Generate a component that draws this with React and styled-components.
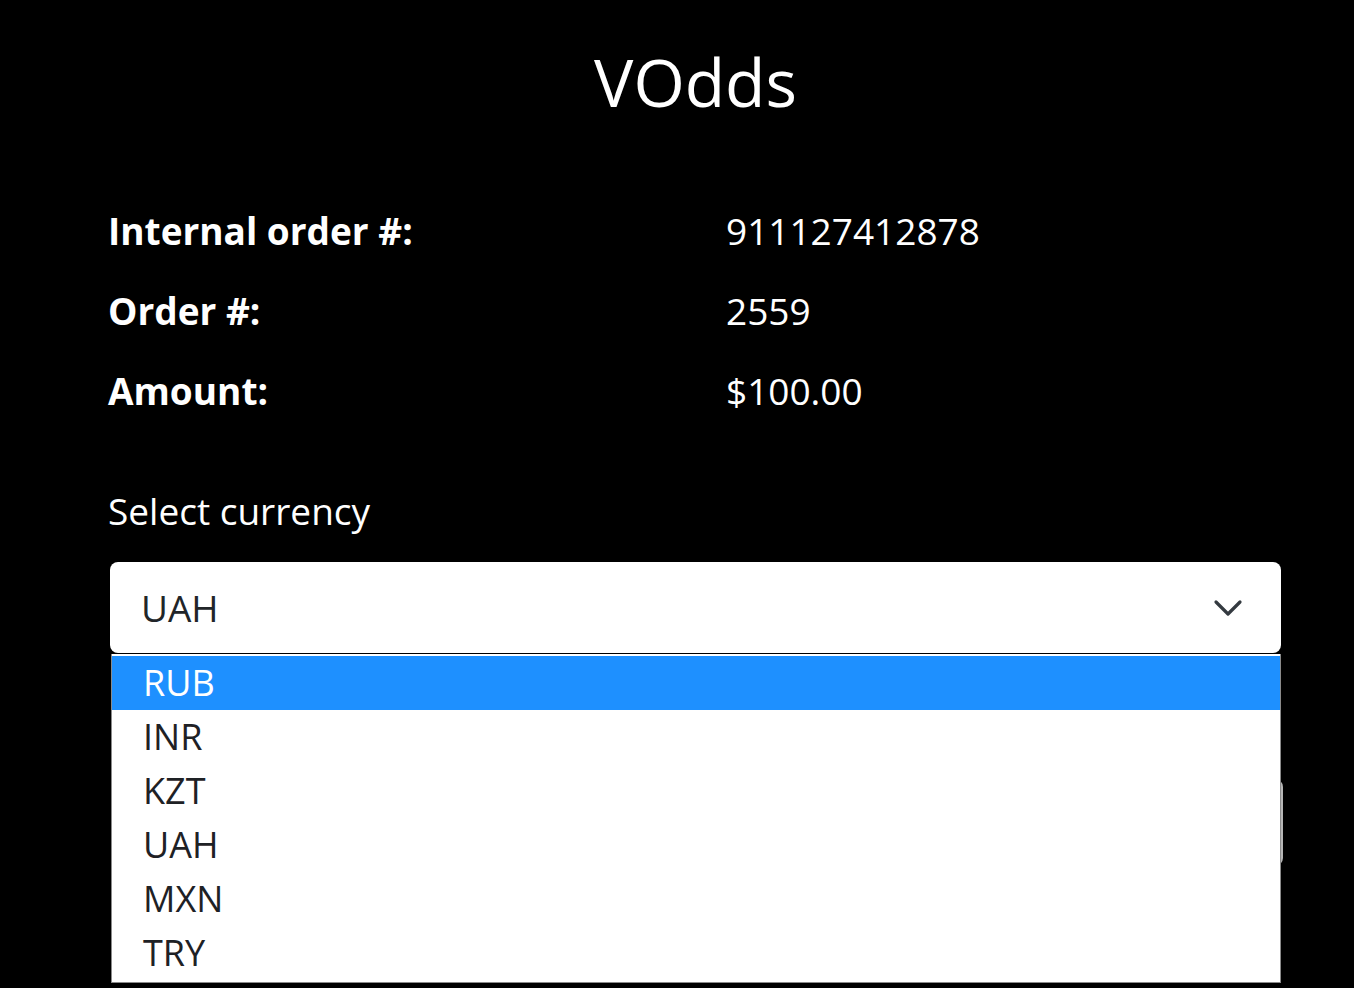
import React from "react";
import styled, { createGlobalStyle } from "styled-components";

const GlobalStyle = createGlobalStyle`
    html, body {
        margin: 0;
        padding: 0;
        background: #000;
        font-family: "Open Sans", "Noto Sans", sans-serif;
    }
`;

const orderInfo = [
    { label: "Internal order #:", value: "911127412878" },
    { label: "Order #:", value: "2559" },
    { label: "Amount:", value: "$100.00" }
];

const currencies = ["RUB", "INR", "KZT", "UAH", "MXN", "TRY"];

export default function App() {
    return (
        <>
            <GlobalStyle />
            <Page>
                <Title>VOdds</Title>
                <InfoGrid>
                    {orderInfo.map((row) => (
                        <React.Fragment key={row.label}>
                            <Label>{row.label}</Label>
                            <Value>{row.value}</Value>
                        </React.Fragment>
                    ))}
                </InfoGrid>
                <FieldLabel>Select currency</FieldLabel>
                <SelectWrap>
                    <SelectBox>
                        <span>UAH</span>
                        <svg width="30" height="18" viewBox="0 0 30 18" fill="none">
                            <path d="M3 3l12 12 12-12" stroke="#343a40" strokeWidth="3.2" strokeLinecap="round" strokeLinejoin="round" />
                        </svg>
                    </SelectBox>
                    <Dropdown>
                        {currencies.map((c, i) => (
                            <Option key={c} $active={i === 0}>{c}</Option>
                        ))}
                    </Dropdown>
                </SelectWrap>
                <PayButton>Pay</PayButton>
            </Page>
        </>
    );
}

const Page = styled.div`
    box-sizing: border-box;
    width: 1354px;
    min-height: 100vh;
    padding: 36px 71px 0 108px;
    color: #fff;
`;

const Title = styled.h1`
    margin: 0 0 78px;
    text-align: center;
    font-size: 66px;
    font-weight: 400;
    line-height: 90px;
`;

const InfoGrid = styled.div`
    display: grid;
    grid-template-columns: 618px 1fr;
    row-gap: 26px;
`;

const Label = styled.div`
    font-size: 37px;
    font-weight: 700;
    line-height: 54px;
`;

const Value = styled.div`
    font-size: 37px;
    font-weight: 400;
    line-height: 54px;
`;

const FieldLabel = styled.div`
    margin-top: 66px;
    font-size: 37px;
    line-height: 54px;
`;

const SelectWrap = styled.div`
    position: relative;
    margin-top: 24px;
    margin-right: 2px;
    margin-left: 2px;
`;

const SelectBox = styled.div`
    box-sizing: border-box;
    height: 91px;
    background: #fff;
    border-radius: 8px;
    display: flex;
    align-items: center;
    justify-content: space-between;
    padding: 0 38px 0 31px;
    font-size: 37px;
    color: #212529;
`;

const Dropdown = styled.div`
    position: absolute;
    top: 92px;
    left: 1px;
    right: 0;
    box-sizing: border-box;
    background: #fff;
    border: 1px solid #8a8a8a;
    border-top: 0;
    padding: 2px 0 2px;
    z-index: 2;
`;

const Option = styled.div`
    height: 54px;
    line-height: 54px;
    padding-left: 31px;
    font-size: 36px;
    color: ${(p) => (p.$active ? "#fff" : "#1e2125")};
    background: ${(p) => (p.$active ? "#1e90ff" : "transparent")};
`;

const PayButton = styled.button`
    display: block;
    box-sizing: border-box;
    width: 1172px;
    height: 87px;
    margin: 126px 0 0 3px;
    border: 2px solid #b5b5b5;
    border-radius: 8px;
    background: #e9ecef;
    font-family: inherit;
    font-size: 37px;
    color: #212529;
`;
